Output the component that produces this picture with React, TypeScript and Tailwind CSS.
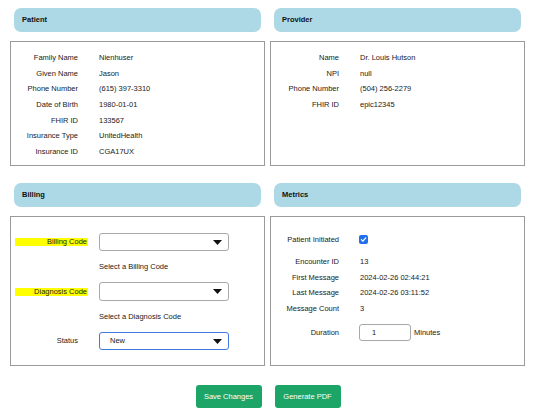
import React from "react";

const font = { fontFamily: '"Liberation Sans", Arial, sans-serif' };

function Header({ title }: { title: string }) {
  return (
    <div className="mx-[4px] h-[24px] rounded-[7px] bg-[#add8e6] flex items-center pl-[8px] text-[7.5px] font-bold text-[#111]">
      {title}
    </div>
  );
}

function Row({ label, value, lw = 67 }: { label: string; value: React.ReactNode; lw?: number }) {
  return (
    <div className="flex items-center h-[15.6px]">
      <div className={lw === 67 ? "w-[67px] text-right" : "w-[68px] text-right"}>{label}</div>
      <div className="pl-[21px]">{value}</div>
    </div>
  );
}

function Arrow() {
  return (
    <svg width="9" height="5" viewBox="0 0 9 5" className="mr-[6px]">
      <polygon points="0,0 9,0 4.5,5" fill="#111" />
    </svg>
  );
}

export default function App() {
  return (
    <div style={font} className="w-[536px] h-[414px] bg-white text-[7.5px] text-[#1a1a1a] pl-[10px] pt-[8px]">
      <div className="grid grid-cols-[255px_255px] gap-x-[5px]">
        {/* Patient */}
        <div>
          <Header title="Patient" />
          <div className="mt-[9px] h-[125px] border border-[#9a9a9a] pt-[8px]">
            <Row label="Family Name" value="Nienhuser" />
            <Row label="Given Name" value="Jason" />
            <Row label="Phone Number" value="(615) 397-3310" />
            <Row label="Date of Birth" value="1980-01-01" />
            <Row label="FHIR ID" value="133567" />
            <Row label="Insurance Type" value="UnitedHealth" />
            <Row label="Insurance ID" value="CGA17UX" />
          </div>
        </div>
        {/* Provider */}
        <div>
          <Header title="Provider" />
          <div className="mt-[9px] h-[125px] border border-[#9a9a9a] pt-[8px]">
            <Row lw={68} label="Name" value="Dr. Louis Hutson" />
            <Row lw={68} label="NPI" value="null" />
            <Row lw={68} label="Phone Number" value="(504) 256-2279" />
            <Row lw={68} label="FHIR ID" value="epic12345" />
          </div>
        </div>

        {/* Billing */}
        <div className="mt-[17px]">
          <Header title="Billing" />
          <div className="mt-[9px] h-[150px] border border-[#9a9a9a] pt-[16px] pl-[4px]">
            <div className="flex items-center h-[18px]">
              <div className="w-[73px] h-[8px] bg-[#ffff00] flex items-center justify-end pr-[1px]">Billing Code</div>
              <div className="ml-[11px] w-[130px] h-[18px] rounded-[3px] border border-[#a8a8a8] flex items-center justify-end">
                <Arrow />
              </div>
            </div>
            <div className="h-[31px] flex items-center pl-[84px]">Select a Billing Code</div>
            <div className="flex items-center h-[19px]">
              <div className="w-[73px] h-[8px] bg-[#ffff00] flex items-center justify-end pr-[1px]">Diagnosis Code</div>
              <div className="ml-[11px] w-[130px] h-[19px] rounded-[3px] border border-[#a8a8a8] flex items-center justify-end">
                <Arrow />
              </div>
            </div>
            <div className="h-[31px] flex items-center pl-[84px]">Select a Diagnosis Code</div>
            <div className="flex items-center h-[18px]">
              <div className="w-[63px] text-right">Status</div>
              <div className="ml-[21px] w-[130px] h-[18px] rounded-[3px] border-[1.5px] border-[#3f78e0] flex items-center justify-between">
                <span className="pl-[10px]">New</span>
                <Arrow />
              </div>
            </div>
          </div>
        </div>

        {/* Metrics */}
        <div className="mt-[17px]">
          <Header title="Metrics" />
          <div className="mt-[9px] h-[150px] border border-[#9a9a9a] pt-[17px]">
            <div className="flex items-center h-[11px]">
              <div className="w-[68px] text-right">Patient Initiated</div>
              <div className="ml-[20px] w-[9px] h-[9px] rounded-[2px] bg-[#1f6ff0] flex items-center justify-center">
                <svg width="7" height="7" viewBox="0 0 10 10">
                  <path d="M2 5.2 L4.2 7.4 L8.2 2.6" stroke="white" strokeWidth="1.8" fill="none" strokeLinecap="round" strokeLinejoin="round" />
                </svg>
              </div>
            </div>
            <div className="h-[9px]" />
            <Row lw={68} label="Encounter ID" value="13" />
            <Row lw={68} label="First Message" value="2024-02-26 02:44:21" />
            <Row lw={68} label="Last Message" value="2024-02-26 03:11:52" />
            <Row lw={68} label="Message Count" value="3" />
            <div className="flex items-center h-[17px] mt-[8px]">
              <div className="w-[68px] text-right">Duration</div>
              <div className="ml-[20px] w-[52px] h-[17px] rounded-[3px] border border-[#a8a8a8] flex items-center pl-[12px]">1</div>
              <div className="ml-[3px]">Minutes</div>
            </div>
          </div>
        </div>
      </div>

      <div className="flex justify-center gap-[13px] mt-[19px] pr-[10px]">
        <button className="w-[66px] h-[23px] rounded-[3px] bg-[#1ca566] text-white text-[7.5px]">Save Changes</button>
        <button className="w-[66px] h-[23px] rounded-[3px] bg-[#1ca566] text-white text-[7.5px]">Generate PDF</button>
      </div>
    </div>
  );
}
